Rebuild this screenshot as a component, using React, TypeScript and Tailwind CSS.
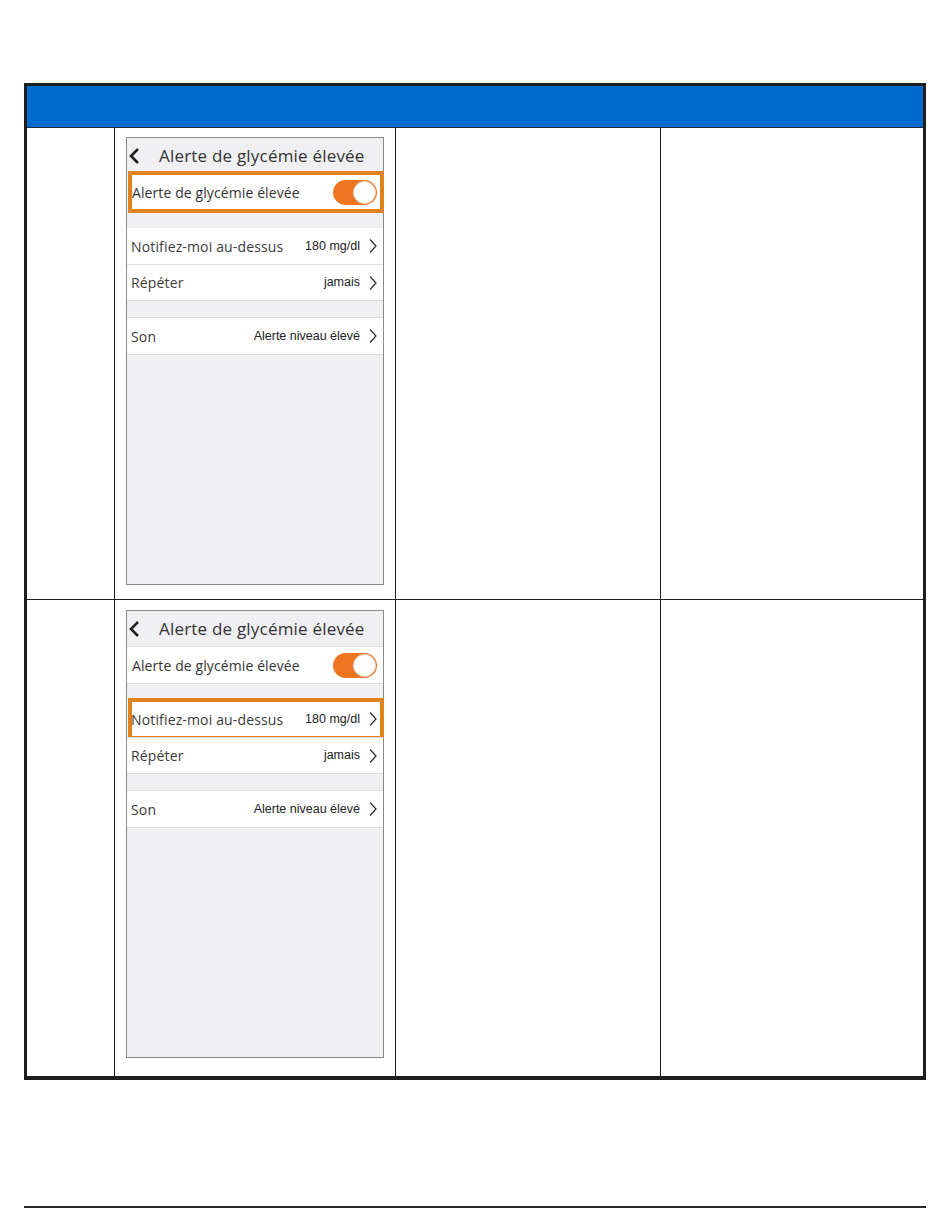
import React from "react";

const Chevron = () => (
  <svg width="10" height="16" viewBox="0 0 10 16" className="shrink-0">
    <path d="M2 1.5 L8 8 L2 14.5" fill="none" stroke="#333" strokeWidth="1.3" />
  </svg>
);

const Toggle = () => (
  <div className="relative w-[44px] h-[25px] rounded-full bg-[#ee7522]">
    <div className="absolute right-[1px] top-[1px] w-[23px] h-[23px] rounded-full bg-white border border-[#e8d8c8]" />
  </div>
);

type RowProps = {
  label: string;
  value: string;
  hl?: boolean;
  top?: boolean;
};

const Row = ({ label, value, hl, top }: RowProps) => (
  <div
    className={
      "relative h-[36px] bg-white flex items-center pl-[4px] pr-[5px] " +
      (top ? "" : "border-t border-[#dcdcdf]")
    }
  >
    <span className="text-[14px] text-[#3a3a3a] font-['Open_Sans',sans-serif] tracking-[0.15px]">
      {label}
    </span>
    <span className="ml-auto mr-[8px] text-[12.5px] text-[#222] font-['Liberation_Sans',Arial,sans-serif]">
      {value}
    </span>
    <Chevron />
    {hl && (
      <div className="absolute left-[1px] -right-[1px] -top-[3px] -bottom-[3px] border-4 border-[#e0821e]" />
    )}
  </div>
);

const Phone = ({ hlToggle, hlNotify }: { hlToggle?: boolean; hlNotify?: boolean }) => (
  <div className="w-[258px] h-[448px] border border-[#8a8a8a] bg-[#f0f0f3] flex flex-col font-['Open_Sans',sans-serif]">
    <div className="h-[36px] flex items-center border-b border-[#dcdcdf]">
      <svg width="14" height="18" viewBox="0 0 14 18" className="ml-[1px]">
        <path d="M10 2 L3 9 L10 16" fill="none" stroke="#222" strokeWidth="2.6" />
      </svg>
      <span className="ml-[17px] text-[17px] text-[#333] tracking-[0.2px]">Alerte de glycémie élevée</span>
    </div>
    <div className="relative h-[37px] bg-white flex items-center pl-[5px] pr-[6px] border-b border-[#dcdcdf]">
      <span className="text-[14px] text-[#333] tracking-[0.1px]">Alerte de glycémie élevée</span>
      <div className="ml-auto">
        <Toggle />
      </div>
      {hlToggle && (
        <div className="absolute left-[1px] -right-[1px] -top-[3px] -bottom-[3px] border-4 border-[#e0821e]" />
      )}
    </div>
    <div className="h-[17px]" />
    <div className="border-b border-[#dcdcdf]">
      <Row label="Notifiez-moi au-dessus" value="180 mg/dl" hl={hlNotify} top />
      <Row label="Répéter" value="jamais" />
    </div>
    <div className="h-[17px] border-b border-[#dcdcdf]" />
    <div className="border-b border-[#dcdcdf]">
      <Row label="Son" value="Alerte niveau élevé" top />
    </div>
  </div>
);

export default function App() {
  return (
    <div className="w-[950px] h-[1232px] bg-white pt-[83px] px-[24px]">
      <div className="w-[902px] border-[3px] border-[#1e1e1e] border-b-4">
        <div className="h-[42px] bg-[#006bce] border-b border-[#1e2a40]" />
        <div className="grid grid-cols-[88px_281px_265px_1fr] h-[472px] border-b border-[#1e1e1e]">
          <div className="border-r border-[#1e1e1e]" />
          <div className="border-r border-[#1e1e1e] pl-[11px] pt-[9px]">
            <Phone hlToggle />
          </div>
          <div className="border-r border-[#1e1e1e]" />
          <div />
        </div>
        <div className="grid grid-cols-[88px_281px_265px_1fr] h-[476px]">
          <div className="border-r border-[#1e1e1e]" />
          <div className="border-r border-[#1e1e1e] pl-[11px] pt-[10px]">
            <Phone hlNotify />
          </div>
          <div className="border-r border-[#1e1e1e]" />
          <div />
        </div>
      </div>
      <div className="mt-[126px] h-[2px] bg-[#2a2a2a] w-[902px]" />
    </div>
  );
}
